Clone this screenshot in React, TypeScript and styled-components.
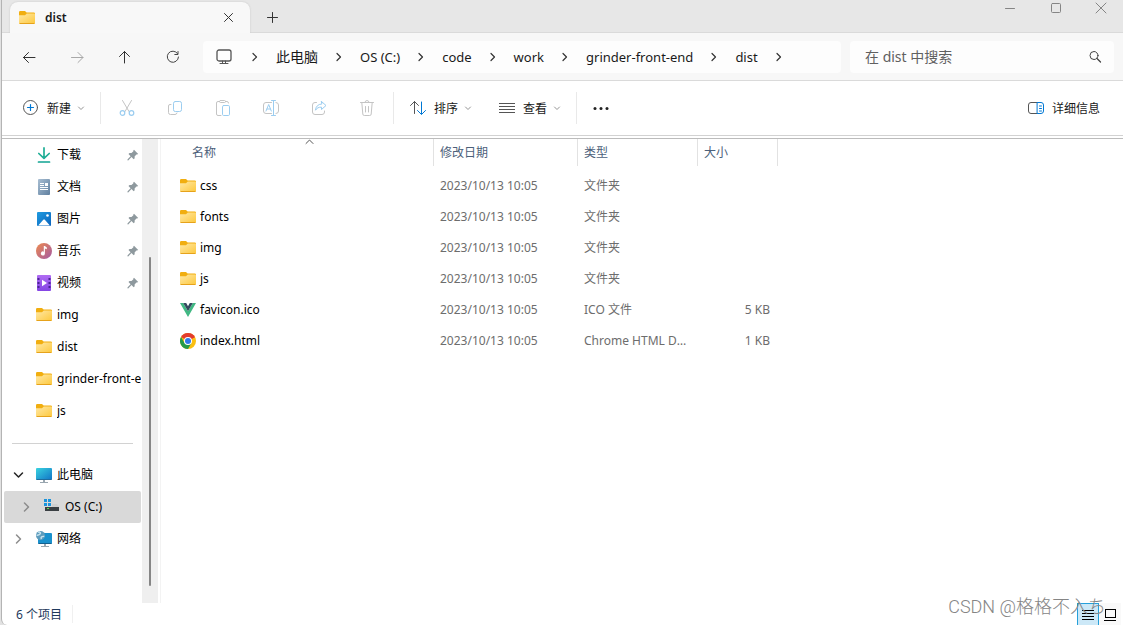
import React from "react";
import styled, { createGlobalStyle } from "styled-components";

const GlobalStyle = createGlobalStyle`
  *, *::before, *::after { box-sizing: border-box; }
  body {
    margin: 0;
    background: #e2e2e2;
    font-family: "Noto Sans", "Noto Sans CJK SC", sans-serif;
    font-size: 12px;
    line-height: 16px;
    color: #1a1a1a;
  }
  button, input { font: inherit; color: inherit; }
  button { border: 0; padding: 0; background: none; }
  ul, ol { list-style: none; margin: 0; padding: 0; }
  a { color: inherit; text-decoration: none; }
  svg { display: block; flex: none; }
`;

const Window = styled.div`
  display: flex;
  flex-direction: column;
  min-height: 100vh;
  margin-left: 1px;
  border-left: 1px solid #b4b4b4;
  border-bottom-left-radius: 6px;
  background: #fff;
  overflow: hidden;
  position: relative;
`;

const TitleBar = styled.header`
  display: flex;
  align-items: flex-end;
  height: 33px;
  padding-left: 8px;
  background: #e7e7e7;
  border-bottom: 1px solid #dadada;
`;

const Tab = styled.div`
  display: flex;
  align-items: center;
  width: 240px;
  height: 31px;
  margin-bottom: -1px;
  padding: 0 14px 0 9px;
  gap: 10px;
  border-radius: 8px 8px 0 0;
  background: #f8f8f8;
  box-shadow: 0 0 2px #c4c4c4;
  clip-path: inset(-2px -2px 0 -2px);
`;

const TabTitle = styled.span`
  flex: 1;
  font-weight: 600;
`;

const IconButton = styled.button<{ $w?: number; $h?: number }>`
  display: flex;
  align-items: center;
  justify-content: center;
  width: ${(p) => p.$w ?? 48}px;
  height: ${(p) => p.$h ?? 32}px;
`;

const Caption = styled.div`
  display: flex;
  align-self: flex-start;
  margin-left: auto;
`;

const NavBar = styled.nav`
  display: flex;
  align-items: center;
  height: 48px;
  padding: 0 9px 0 3px;
  background: #f7f7f7;
  border-bottom: 1px solid #dadada;
`;

const AddressBar = styled.ol`
  display: flex;
  align-items: center;
  flex: 1;
  height: 32px;
  margin-left: 6px;
  padding-left: 13px;
  border-radius: 4px;
  background: #fdfdfd;
  line-height: 20px;
`;

const Crumb = styled.li<{ $root?: boolean; $latin?: boolean }>`
  display: flex;
  align-items: center;
  gap: ${(p) => (p.$root ? 15 : 13)}px;
  margin-right: 13px;
  font-size: ${(p) => (p.$latin ? 13 : 14)}px;
  white-space: nowrap;
`;

const SearchBox = styled.div`
  display: flex;
  align-items: center;
  width: 264px;
  height: 32px;
  margin-left: 9px;
  padding: 0 12px 0 15px;
  border-radius: 4px;
  background: #fdfdfd;
`;

const SearchInput = styled.input`
  flex: 1;
  min-width: 0;
  border: 0;
  padding: 0;
  outline: 0;
  background: none;
  font-size: 14px;
  line-height: 20px;
  &::placeholder { color: #606060; opacity: 1; }
`;

const Toolbar = styled.div`
  display: flex;
  align-items: center;
  height: 55px;
  padding: 0 23px 0 21px;
  border-bottom: 1px solid #d2d2d2;
`;

const ToolButton = styled.button`
  display: flex;
  align-items: center;
  gap: 8px;
  height: 32px;
  white-space: nowrap;
`;

const ToolLabel = styled.span`
  padding-top: 2px;
`;

const MenuButton = styled(ToolButton)<{ $w: number }>`
  width: ${(p) => p.$w}px;
  & > svg:last-child { margin-left: -4px; }
`;

const Divider = styled.span<{ $left?: number; $right?: number }>`
  width: 1px;
  height: 32px;
  margin: 0 ${(p) => p.$right ?? 0}px 0 ${(p) => p.$left ?? 0}px;
  background: #e9e9e9;
`;

const Spacer = styled.span`
  flex: 1;
`;

const Body = styled.div`
  display: flex;
  flex: 1;
  margin-top: 2px;
  border-top: 1px solid #bcbcbc;
`;

const Sidebar = styled.aside`
  width: 140px;
  overflow: hidden;
`;

const SideItem = styled.a<{ $level?: number; $active?: boolean }>`
  display: flex;
  align-items: center;
  height: 32px;
  margin: 0 1px 0 2px;
  padding-left: ${(p) => (p.$level ? 16 : 8)}px;
  border-radius: 2px;
  background: ${(p) => (p.$active ? "#d9d9d9" : "transparent")};
  color: #000;
  white-space: nowrap;
`;

const Expander = styled.span`
  width: 12px;
  margin-right: 12px;
`;

const SideLabel = styled.span`
  flex: 1;
  min-width: 0;
  margin-left: 5px;
  overflow: hidden;
`;

const PinMark = styled.svg`
  margin-right: 2px;
`;

const SideRule = styled.hr`
  height: 1px;
  margin: 16px 9px 15px 10px;
  border: 0;
  background: #d2d2d2;
`;

const ScrollTrack = styled.div`
  display: flex;
  justify-content: center;
  width: 16px;
  margin-right: 2px;
  padding: 118px 0 17px;
  background: #efefef;
`;

const ScrollThumb = styled.div`
  width: 2px;
  border-radius: 1px;
  background: #868686;
`;

const Main = styled.main`
  flex: 1;
  min-width: 0;
  border-left: 1px solid #f3f3f3;
`;

const FileTable = styled.table`
  width: 100%;
  table-layout: fixed;
  border-collapse: collapse;
  color: #6d6d6d;
`;

const Col = styled.col<{ $w?: number }>`
  width: ${(p) => (p.$w ? `${p.$w}px` : "auto")};
`;

const HeadCell = styled.th`
  height: 31px;
  padding: 0;
  vertical-align: top;
  text-align: left;
  font-weight: 400;
  color: #4c607a;
`;

const HeadLabel = styled.div<{ $first?: boolean }>`
  position: relative;
  height: 27px;
  padding: 6px 0 0 ${(p) => (p.$first ? 31 : 6)}px;
  border-right: 1px solid #e2e2e2;
`;

const SortMark = styled.svg`
  position: absolute;
  top: 0;
  left: 50%;
  margin-left: 8px;
`;

const Cell = styled.td<{ $right?: boolean }>`
  height: 31px;
  padding: 0 8px 0 6px;
  text-align: ${(p) => (p.$right ? "right" : "left")};
  white-space: nowrap;
  overflow: hidden;
  text-overflow: ellipsis;
`;

const NameCell = styled(Cell)`
  padding-left: 19px;
  color: #000;
`;

const FileName = styled.span`
  display: flex;
  align-items: center;
  gap: 4px;
`;

const StatusBar = styled.footer`
  display: flex;
  align-items: center;
  height: 22px;
  padding: 0 2px 0 14px;
  color: #1e395b;
`;

const StatusText = styled.span`
  padding: 2px 10px 0 0;
  border-right: 1px solid #f0f0f0;
`;

const ViewToggle = styled.button<{ $on?: boolean }>`
  display: flex;
  align-items: center;
  justify-content: center;
  width: 22px;
  height: 22px;
  border: 1px solid ${(p) => (p.$on ? "#26a0da" : "transparent")};
  border-bottom-width: 0;
  background: ${(p) => (p.$on ? "#cce8f7" : "#f9f9f9")};
`;

const Watermark = styled.div`
  position: absolute;
  right: 17px;
  bottom: 6px;
  font-family: Roboto, "Noto Sans CJK SC", sans-serif;
  font-size: 18px;
  font-weight: 300;
  line-height: 24px;
  color: #858585;
  pointer-events: none;
  white-space: nowrap;
`;

const line = { fill: "none", strokeLinecap: "round", strokeLinejoin: "round" } as const;

const Folder = () => (
  <svg width="16" height="16" viewBox="0 0 16 16">
    <defs>
      <linearGradient id="folderFace" x1="0" y1="0" x2="1" y2="1">
        <stop offset="0" stopColor="#ffe8a6" />
        <stop offset="1" stopColor="#fdc83c" />
      </linearGradient>
    </defs>
    <path d="M0 2.200A1.200 1.200 0 0 1 1.200 1h4.800L7.600 2.500h7.200A1.200 1.200 0 0 1 16 3.700V8H0z" fill="#f1ae10" />
    <path d="M0 5.200h6L7.800 3.600H15a1 1 0 0 1 1 1V13a1 1 0 0 1-1 1H1a1 1 0 0 1-1-1z" fill="url(#folderFace)" />
    <path d="M.6 13.500h14.800" stroke="#e6a21b" />
  </svg>
);

const Chevron = ({ color = "#333" }: { color?: string }) => (
  <svg width="16" height="16" viewBox="0 0 16 16" {...line} stroke={color}>
    <path d="M6 4.500l3.500 3.500L6 11.500" strokeWidth="1.200" />
  </svg>
);

const SmallDown = () => (
  <svg width="12" height="12" viewBox="0 0 12 12" {...line} stroke="#959595">
    <path d="M3.500 5L6 7.500 8.500 5" />
  </svg>
);

const TreeArrow = ({ open }: { open?: boolean }) => (
  <svg width="12" height="12" viewBox="0 0 12 12" {...line} stroke={open ? "#222" : "#8c8c8c"} strokeWidth="1.500">
    <path d={open ? "M2.500 4L6.500 8l4-4" : "M4.500 2l4 4-4 4"} />
  </svg>
);

const Pin = () => (
  <PinMark width="12" height="12" viewBox="0 0 12 12" fill="#8e999e">
    <path d="M7 .8l4.200 4.200-1.200.6-.6-.1-1.800 1.900.1 1.900-1 1-2.200-2.200L1.200 11.400l-.8-.2.2-.9 3-3.100L1.500 5l1-1 2 .1 1.900-1.900L6.300 1.500z" />
  </PinMark>
);

const Download = () => (
  <svg width="16" height="16" viewBox="0 0 16 16" {...line} stroke="#1fae96" strokeWidth="1.700">
    <path d="M8 .9v10.300M2.800 6.500L8 11.400l5.200-4.900" />
    <path d="M2.500 15h11" stroke="#0fa392" />
  </svg>
);

const Document = () => (
  <svg width="16" height="16" viewBox="0 0 16 16">
    <defs>
      <linearGradient id="docFace" x1="0" y1="0" x2="1" y2="1">
        <stop offset="0" stopColor="#a9bfd3" />
        <stop offset="1" stopColor="#5f7f9f" />
      </linearGradient>
    </defs>
    <rect x="2" width="12" height="16" rx="1" fill="url(#docFace)" />
    <path d="M4 4.500h4M4 6.500h4M4 8.500h8M4 10.500h8" stroke="#fff" />
    <rect x="9" y="4" width="3" height="3" fill="#fff" />
  </svg>
);

const Picture = () => (
  <svg width="16" height="16" viewBox="0 0 16 16">
    <defs>
      <linearGradient id="pictureFace" x1="0" y1="0" x2="1" y2="1">
        <stop offset="0" stopColor="#1f9be0" />
        <stop offset="1" stopColor="#0a63bd" />
      </linearGradient>
    </defs>
    <rect x="1" y="1" width="14" height="14" rx="1" fill="url(#pictureFace)" />
    <path d="M2.200 14.400l5.100-5.600a1 1 0 0 1 1.500 0l5.100 5.600z" fill="#fff" />
    <circle cx="11.500" cy="4.500" r="1.300" fill="#fff" />
  </svg>
);

const Music = () => (
  <svg width="16" height="16" viewBox="0 0 16 16">
    <defs>
      <linearGradient id="musicFace" x1="0" y1="0" x2="1" y2="1">
        <stop offset="0" stopColor="#ee8a4e" />
        <stop offset="1" stopColor="#a35aa5" />
      </linearGradient>
    </defs>
    <circle cx="8" cy="8" r="8" fill="url(#musicFace)" />
    <path d="M7.800 3h1l2 1.500v1.800L8.900 5.500v5a2 2 0 1 1-1.100-1.800z" fill="#fff" />
  </svg>
);

const Video = () => (
  <svg width="16" height="16" viewBox="0 0 16 16">
    <defs>
      <linearGradient id="videoFace" x1="0" y1="0" x2="0" y2="1">
        <stop offset="0" stopColor="#b06cf3" />
        <stop offset="1" stopColor="#8444e4" />
      </linearGradient>
    </defs>
    <rect x="1" width="14" height="16" rx="1" fill="url(#videoFace)" />
    <path d="M2.500 3v2M2.500 7v2M2.500 11v2M13.500 3v2M13.500 7v2M13.500 11v2" stroke="#4b2394" strokeWidth="2" />
    <path d="M6 4.800L11 8l-5 3.200z" fill="#fff" />
  </svg>
);

const Computer = () => (
  <svg width="16" height="16" viewBox="0 0 16 16">
    <defs>
      <linearGradient id="screenFace" x1="0" y1="0" x2="1" y2="1">
        <stop offset="0" stopColor="#39d3e0" />
        <stop offset="1" stopColor="#1173c6" />
      </linearGradient>
    </defs>
    <path d="M7 12h2v3H7zM4 15h8v1H4z" fill="#9aa7b0" />
    <rect y="1" width="16" height="12" rx="1" fill="url(#screenFace)" />
    <path d="M.5 12.500h15" stroke="#1e6c9e" />
  </svg>
);

const Drive = () => (
  <svg width="16" height="16" viewBox="0 0 16 16">
    <path d="M0 0h3v3H0zM4 0h3v3H4zM0 4h3v3H0zM4 4h3v3H4z" fill="#1a94dc" />
    <path d="M8 5h5l2 3H8z" fill="#cfcfcf" />
    <path d="M1 8h14v4H1z" fill="#3a3f43" />
    <path d="M3 9.500h2" stroke="#59e04e" />
  </svg>
);

const Network = () => (
  <svg width="16" height="16" viewBox="0 0 16 16">
    <path d="M8 13h2v2H8zM5 15h8v1H5z" fill="#9aa7b0" />
    <rect x="2" y="2" width="14" height="11" rx="1" fill="#1a91cd" />
    <path d="M2.500 12.500h13" stroke="#14608f" />
    <circle cx="4.500" cy="4.500" r="4.500" fill="#5e9cbd" />
    <path d="M2 1.300c2-.8 3 .6 2 1.700S2.500 4.500.6 4.200M5.500 8c-1-1.500 0-3 2.800-2.500" stroke="#c8e4ef" strokeWidth="1.400" fill="none" />
  </svg>
);

const Vue = () => (
  <svg width="16" height="16" viewBox="0 0 16 16">
    <path d="M0 1h3.200L8 9.300 12.800 1H16L8 15z" fill="#41b883" />
    <path d="M3.200 1h3L8 4.200 9.800 1h3L8 9.300z" fill="#34495e" />
  </svg>
);

const Chrome = () => (
  <svg width="16" height="16" viewBox="0 0 16 16">
    <circle cx="8" cy="8" r="8" fill="#fbbf12" />
    <path d="M8 8L1.070 4A8 8 0 0 1 14.930 4z" fill="#e33b2e" />
    <path d="M1.070 4A8 8 0 0 0 8 16l3.500-6L8 8 4.540 10z" fill="#24994a" />
    <path d="M8 4h6.930L8 8z" fill="#e33b2e" />
    <circle cx="8" cy="8" r="4" fill="#fff" />
    <circle cx="8" cy="8" r="3" fill="#2f78e8" />
  </svg>
);

const BackArrow = () => (
  <svg width="16" height="16" viewBox="0 0 16 16" {...line} stroke="#333">
    <path d="M2.500 8.500H14M7.500 3.500l-5 5 5 5" />
  </svg>
);
const ForwardArrow = () => (
  <svg width="16" height="16" viewBox="0 0 16 16" {...line} stroke="#a8a8a8">
    <path d="M2.500 8.500H14M9 3.500l5 5-5 5" />
  </svg>
);
const UpArrow = () => (
  <svg width="16" height="16" viewBox="0 0 16 16" {...line} stroke="#333">
    <path d="M7.500 14V2.500M2.500 7.500l5-5 5 5" />
  </svg>
);
const Refresh = () => (
  <svg width="16" height="16" viewBox="0 0 16 16" {...line} stroke="#444">
    <path d="M12.500 4.500A5.600 5.600 0 1 0 13.500 8M13 2.500v3H9.800" />
  </svg>
);
const Monitor = () => (
  <svg width="16" height="16" viewBox="0 0 16 16" {...line} stroke="#555">
    <rect x="1" y="1" width="14" height="11" rx="2" strokeWidth="1.300" />
    <path d="M6.500 12v2.500M9.500 12v2.500M4 14.500h8" />
  </svg>
);

const Cut = () => (
  <svg width="16" height="16" viewBox="0 0 16 16" {...line} stroke="#c4c4c4">
    <path d="M3.500.5l6.500 11M12.500.5L6 11.500" />
    <g stroke="#9bcdf0" strokeWidth="1.200">
      <circle cx="3.500" cy="13" r="2.300" />
      <circle cx="12.500" cy="13" r="2.300" />
    </g>
  </svg>
);
const Copy = () => (
  <svg width="16" height="16" viewBox="0 0 16 16" {...line} stroke="#c4c4c4">
    <path d="M4 4.500H3a1.500 1.500 0 0 0-1.500 1.500v6.500a2 2 0 0 0 2 2h4.500a2 2 0 0 0 2-1.500" />
    <rect x="6.500" y="1.500" width="8" height="10" rx="1.800" stroke="#9bcdf0" />
  </svg>
);
const Paste = () => (
  <svg width="16" height="16" viewBox="0 0 16 16" {...line} stroke="#c4c4c4">
    <path d="M6 15.500H3A1.500 1.500 0 0 1 1.500 14V3A1.500 1.500 0 0 1 3 1.500h1.500M10.500 1.500H12A1.500 1.500 0 0 1 13.500 3" />
    <rect x="4.500" y=".5" width="6" height="2" rx="1" />
    <rect x="7.500" y="5.500" width="7" height="10" rx="1.200" stroke="#9bcdf0" />
  </svg>
);
const Rename = () => (
  <svg width="16" height="16" viewBox="0 0 16 16" {...line} stroke="#c4c4c4">
    <path d="M8.500 13.500H3a2.500 2.500 0 0 1-2.500-2.500V5A2.500 2.500 0 0 1 3 2.500h5.500M13 2.500a2.500 2.500 0 0 1 2.500 2.500v6a2.500 2.500 0 0 1-2.500 2.500" />
    <path d="M3 11l2.700-6.500L8.300 11M4 9h3.500M8.500.5h4M8.500 15.500h4M10.500.5v15" stroke="#9bcdf0" />
  </svg>
);
const Share = () => (
  <svg width="16" height="16" viewBox="0 0 16 16" {...line} stroke="#c4c4c4">
    <path d="M5.500 2.500H4A2.500 2.500 0 0 0 1.500 5v7A2.500 2.500 0 0 0 4 14.500h7a2.500 2.500 0 0 0 2.500-2.500v-1" />
    <path d="M10.500 1.500L15 5.500l-4.500 4V7.200C7.500 7 6 8 4.500 10.200 4.800 6.500 7 4.200 10.500 4z" stroke="#9bcdf0" />
  </svg>
);
const Trash = () => (
  <svg width="16" height="16" viewBox="0 0 16 16" {...line} stroke="#c4c4c4">
    <path d="M1.500 2.500h13M6 2.500a2 2 0 0 1 4 0M2.800 2.500l1 11.500a1.500 1.500 0 0 0 1.500 1.500h5.400a1.500 1.500 0 0 0 1.500-1.500l1-11.500M6.500 6.500v5.500M9.500 6.500v5.500" />
  </svg>
);

const crumbs = [
  { name: "此电脑" },
  { name: "OS (C:)", latin: true },
  { name: "code", latin: true },
  { name: "work", latin: true },
  { name: "grinder-front-end", latin: true },
  { name: "dist", latin: true },
];

const disabledTools = [
  { label: "剪切", icon: <Cut /> },
  { label: "复制", icon: <Copy /> },
  { label: "粘贴", icon: <Paste /> },
  { label: "重命名", icon: <Rename /> },
  { label: "共享", icon: <Share /> },
  { label: "删除", icon: <Trash /> },
];

const pinned = [
  { name: "下载", icon: <Download />, pin: true },
  { name: "文档", icon: <Document />, pin: true },
  { name: "图片", icon: <Picture />, pin: true },
  { name: "音乐", icon: <Music />, pin: true },
  { name: "视频", icon: <Video />, pin: true },
  { name: "img", icon: <Folder /> },
  { name: "dist", icon: <Folder /> },
  { name: "grinder-front-end", icon: <Folder /> },
  { name: "js", icon: <Folder /> },
];

const files = [
  { name: "css", icon: <Folder />, type: "文件夹", size: "" },
  { name: "fonts", icon: <Folder />, type: "文件夹", size: "" },
  { name: "img", icon: <Folder />, type: "文件夹", size: "" },
  { name: "js", icon: <Folder />, type: "文件夹", size: "" },
  { name: "favicon.ico", icon: <Vue />, type: "ICO 文件", size: "5 KB" },
  { name: "index.html", icon: <Chrome />, type: "Chrome HTML Document", size: "1 KB" },
];

export default function App() {
  return (
    <>
      <GlobalStyle />
      <Window>
        <TitleBar>
          <Tab>
            <Folder />
            <TabTitle>dist</TabTitle>
            <IconButton $w={16} $h={16} aria-label="关闭标签页">
              <svg width="16" height="16" viewBox="0 0 16 16" {...line} stroke="#333">
                <path d="M4.500 3.500l8 8M12.500 3.500l-8 8" />
              </svg>
            </IconButton>
          </Tab>
          <IconButton $w={44} $h={30} aria-label="添加新标签页">
            <svg width="16" height="16" viewBox="0 0 16 16" {...line} stroke="#333">
              <path d="M8.500 3.500v10M3.500 8.500h10" />
            </svg>
          </IconButton>
          <Caption>
            <IconButton $w={46} $h={16} aria-label="最小化">
              <svg width="12" height="12" viewBox="0 0 12 12" {...line} stroke="#858585">
                <path d="M1.500 6.500h9" />
              </svg>
            </IconButton>
            <IconButton $w={46} $h={16} aria-label="最大化">
              <svg width="12" height="12" viewBox="0 0 12 12" {...line} stroke="#858585">
                <rect x="1.500" y="1.500" width="9" height="9" rx="1" />
              </svg>
            </IconButton>
            <IconButton $w={44} $h={16} aria-label="关闭">
              <svg width="12" height="12" viewBox="0 0 12 12" {...line} stroke="#858585">
                <path d="M1 1l10 10M11 1L1 11" />
              </svg>
            </IconButton>
          </Caption>
        </TitleBar>

        <NavBar aria-label="导航">
          <IconButton aria-label="后退"><BackArrow /></IconButton>
          <IconButton aria-label="前进" disabled><ForwardArrow /></IconButton>
          <IconButton aria-label="向上"><UpArrow /></IconButton>
          <IconButton aria-label="刷新"><Refresh /></IconButton>
          <AddressBar>
            <Crumb $root><Monitor /><Chevron /></Crumb>
            {crumbs.map((c) => (
              <Crumb key={c.name} $latin={c.latin}>
                <a href="#path">{c.name}</a>
                <Chevron />
              </Crumb>
            ))}
          </AddressBar>
          <SearchBox>
            <SearchInput type="text" aria-label="搜索" placeholder="在 dist 中搜索" />
            <svg width="14" height="14" viewBox="0 0 14 14" {...line} stroke="#444">
              <circle cx="6" cy="5.500" r="4" />
              <path d="M9 8.500l3.500 3.500" strokeWidth="1.300" />
            </svg>
          </SearchBox>
        </NavBar>

        <Toolbar>
          <MenuButton $w={65}>
            <svg width="16" height="16" viewBox="0 0 16 16" {...line} stroke="#555">
              <circle cx="7.500" cy="7.500" r="7" />
              <path d="M7.500 4.500v6M4.500 7.500h6" stroke="#0078d4" strokeWidth="1.200" />
            </svg>
            <ToolLabel>新建</ToolLabel>
            <SmallDown />
          </MenuButton>
          <Divider $left={12} $right={2} />
          {disabledTools.map((t) => (
            <IconButton key={t.label} aria-label={t.label} disabled>{t.icon}</IconButton>
          ))}
          <Divider $left={2} $right={16} />
          <MenuButton $w={89}>
            <svg width="16" height="16" viewBox="0 0 16 16" {...line} stroke="#555">
              <path d="M4.500 13.500v-12M.5 5.500l4-4 4 4" />
              <path d="M11.500 2v12M7.500 10.500l4 4 4-4" stroke="#0078d4" />
            </svg>
            <ToolLabel>排序</ToolLabel>
            <SmallDown />
          </MenuButton>
          <MenuButton $w={62}>
            <svg width="16" height="16" viewBox="0 0 16 16" stroke="#555">
              <path d="M0 3.500h16M0 6.500h16M0 9.500h16M0 12.500h16" />
            </svg>
            <ToolLabel>查看</ToolLabel>
            <SmallDown />
          </MenuButton>
          <Divider $left={15} />
          <IconButton aria-label="更多">
            <svg width="16" height="16" viewBox="0 0 16 16" fill="#222">
              <circle cx="2" cy="8.500" r="1.500" />
              <circle cx="8" cy="8.500" r="1.500" />
              <circle cx="14" cy="8.500" r="1.500" />
            </svg>
          </IconButton>
          <Spacer />
          <ToolButton>
            <svg width="16" height="16" viewBox="0 0 16 16" {...line} stroke="#555">
              <path d="M9.500 2.500H3A2.500 2.500 0 0 0 .5 5v6A2.500 2.500 0 0 0 3 13.500h6.500" />
              <path d="M9.500 2.500H13A2.500 2.500 0 0 1 15.500 5v6a2.500 2.500 0 0 1-2.500 2.500H9.500zM11.500 6h2M11.500 8.500h2M11.500 11h2" stroke="#0078d4" />
            </svg>
            <ToolLabel>详细信息</ToolLabel>
          </ToolButton>
        </Toolbar>

        <Body>
          <Sidebar>
            <ul>
              {pinned.map((p) => (
                <li key={p.name}>
                  <SideItem href="#folder">
                    <Expander />
                    {p.icon}
                    <SideLabel>{p.name}</SideLabel>
                    {p.pin && <Pin />}
                  </SideItem>
                </li>
              ))}
            </ul>
            <SideRule />
            <ul>
              <li>
                <SideItem href="#pc">
                  <Expander><TreeArrow open /></Expander>
                  <Computer />
                  <SideLabel>此电脑</SideLabel>
                </SideItem>
              </li>
              <li>
                <SideItem href="#c" $level={1} $active>
                  <Expander><TreeArrow /></Expander>
                  <Drive />
                  <SideLabel>OS (C:)</SideLabel>
                </SideItem>
              </li>
              <li>
                <SideItem href="#net">
                  <Expander><TreeArrow /></Expander>
                  <Network />
                  <SideLabel>网络</SideLabel>
                </SideItem>
              </li>
            </ul>
          </Sidebar>
          <ScrollTrack><ScrollThumb /></ScrollTrack>
          <Main>
            <FileTable>
              <colgroup>
                <Col $w={273} />
                <Col $w={144} />
                <Col $w={120} />
                <Col $w={80} />
                <Col />
              </colgroup>
              <thead>
                <tr>
                  <HeadCell>
                    <HeadLabel $first>
                      名称
                      <SortMark width="10" height="6" viewBox="0 0 10 6" {...line} stroke="#555">
                        <path d="M1 4.500L4.500 1 8 4.500" />
                      </SortMark>
                    </HeadLabel>
                  </HeadCell>
                  <HeadCell><HeadLabel>修改日期</HeadLabel></HeadCell>
                  <HeadCell><HeadLabel>类型</HeadLabel></HeadCell>
                  <HeadCell><HeadLabel>大小</HeadLabel></HeadCell>
                  <td />
                </tr>
              </thead>
              <tbody>
                {files.map((f) => (
                  <tr key={f.name}>
                    <NameCell><FileName>{f.icon}{f.name}</FileName></NameCell>
                    <Cell>2023/10/13 10:05</Cell>
                    <Cell>{f.type}</Cell>
                    <Cell $right>{f.size}</Cell>
                    <td />
                  </tr>
                ))}
              </tbody>
            </FileTable>
          </Main>
        </Body>

        <StatusBar>
          <StatusText>6 个项目</StatusText>
          <Spacer />
          <ViewToggle $on aria-label="详细信息视图">
            <svg width="12" height="12" viewBox="0 0 12 12" stroke="#000">
              <path d="M0 1.500h12M0 4.500h12M0 7.500h12M0 10.500h12" />
            </svg>
          </ViewToggle>
          <ViewToggle aria-label="大图标视图">
            <svg width="12" height="12" viewBox="0 0 12 12" fill="none" stroke="#000">
              <rect x="1.500" y=".5" width="10" height="8" />
              <path d="M0 11.500h12" />
            </svg>
          </ViewToggle>
        </StatusBar>
        <Watermark>CSDN @格格不入ち</Watermark>
      </Window>
    </>
  );
}
